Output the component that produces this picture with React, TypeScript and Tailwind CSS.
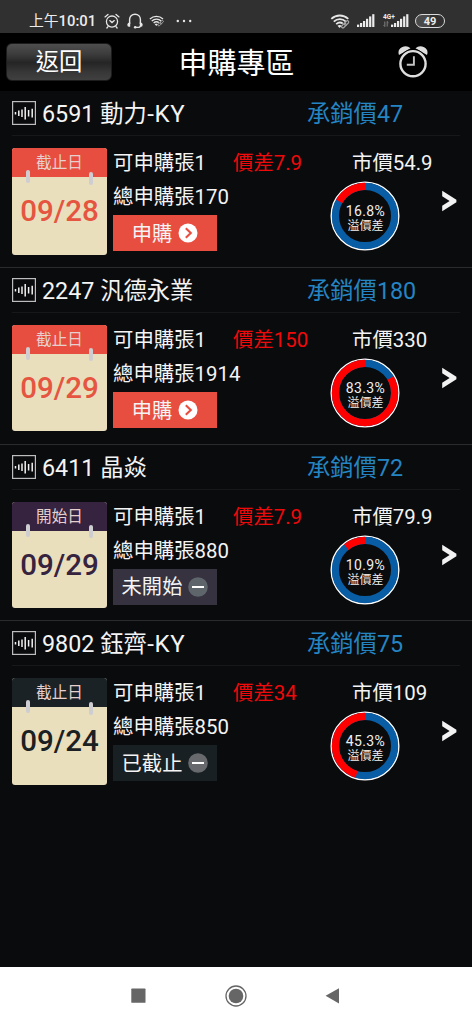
import React from 'react';

type Item = {
  code: string;
  suffix?: string;
  price: string;
  tag: string;
  date: string;
  total: string;
  diff: string;
  market: string;
  pct: number;
  action: string;
  kind: 'go' | 'none';
  head: string;
  ink: string;
  button: string;
  minus: string;
};

const items: Item[] = [
  { code: '6591 動力', suffix: '-KY', price: '47', tag: '截止日', date: '09/28', total: '170', diff: '7.9', market: '54.9', pct: 16.8, action: '申購', kind: 'go', head: 'bg-[#e84e40]', ink: 'text-[#e55540]', button: 'bg-[#e84e40]', minus: '' },
  { code: '2247 汎德永業', price: '180', tag: '截止日', date: '09/29', total: '1914', diff: '150', market: '330', pct: 83.3, action: '申購', kind: 'go', head: 'bg-[#e84e40]', ink: 'text-[#e55540]', button: 'bg-[#e84e40]', minus: '' },
  { code: '6411 晶焱', price: '72', tag: '開始日', date: '09/29', total: '880', diff: '7.9', market: '79.9', pct: 10.9, action: '未開始', kind: 'none', head: 'bg-[#36233f]', ink: 'text-[#36233f]', button: 'bg-[#36323f]', minus: '#5e666c' },
  { code: '9802 鈺齊', suffix: '-KY', price: '75', tag: '截止日', date: '09/24', total: '850', diff: '34', market: '109', pct: 45.3, action: '已截止', kind: 'none', head: 'bg-[#1b2226]', ink: 'text-[#1b2022]', button: 'bg-[#182024]', minus: '#68696c' },
];

function Wifi({ className }: { className: string }) {
  return (
    <svg viewBox="0 0 22 16" className={className} fill="none" stroke="#e6e6e6" strokeWidth="1.9">
      <path d="M1.2 5.2C6.5 0.4 14 0.4 19.3 5.2" />
      <path d="M3.8 8.1C7.7 4.7 13 4.7 16.8 8.1" />
      <path d="M6.4 10.8C8.7 8.8 11.5 8.8 13.4 10.2" />
      <path d="M7.8 12.4C9 11.5 11 11.5 12.2 12.4L10 14.8Z" fill="#e6e6e6" stroke="none" />
      <g stroke="#a8a8a8" strokeWidth="1.2">
        <rect x="11.8" y="11" width="5.6" height="2.8" rx="1.4" transform="rotate(-45 14.6 12.4)" />
        <rect x="14.6" y="8.2" width="5.6" height="2.8" rx="1.4" transform="rotate(-45 17.4 9.6)" />
      </g>
    </svg>
  );
}

function Signal() {
  return (
    <svg viewBox="0 0 18 14" className="h-[14px] w-[18px] shrink-0" fill="#ececec">
      <rect x="0" y="10.6" width="2.2" height="2.4" />
      <rect x="3" y="9" width="2.2" height="4" />
      <rect x="6" y="7" width="2.2" height="6" />
      <rect x="9" y="4.8" width="2.2" height="8.2" />
      <rect x="12.1" y="2.4" width="2.2" height="10.6" />
      <rect x="15.2" y="0.2" width="2.2" height="12.8" />
    </svg>
  );
}

function StatusBar() {
  return (
    <div className="flex h-[33px] items-center bg-[#303030] pt-[9px] pl-[29px] text-[#ececec]">
      <span className="flex w-[68px] text-[14.8px] leading-[20px] whitespace-nowrap">
        <span>上午</span>
        <span className="font-medium">10:01</span>
      </span>
      <svg viewBox="0 0 16 16" className="ml-[7px] h-4 w-4 shrink-0" fill="none" stroke="#e6e6e6" strokeWidth="1.3" strokeLinecap="round">
        <circle cx="8" cy="8.6" r="5.6" />
        <path d="M5.8 7.6L8 9.6L10.3 7.6M1 3.9L4 1.4M15 3.9L12 1.4M4 13.6L2.9 15M12 13.6L13.1 15" />
      </svg>
      <svg viewBox="0 0 16 16" className="ml-[7px] h-4 w-4 shrink-0" fill="none" stroke="#e6e6e6" strokeWidth="1.4">
        <path d="M2.6 11V6.6C2.6 3.6 4.8 1.3 8 1.3S13.4 3.6 13.4 6.6V11" />
        <path d="M0.3 11.5Q0.3 9.7 3.2 9.2V13.8H1.8Q0.3 13.8 0.3 11.5ZM15.7 11.5Q15.7 9.7 12.8 9.2V13.8H14.2Q15.7 13.8 15.7 11.5Z" fill="#e6e6e6" stroke="none" />
        <path d="M8 14.4H11.2Q13 14.4 13.4 13" />
        <circle cx="8.2" cy="14.3" r="1.3" fill="#e6e6e6" stroke="none" />
      </svg>
      <Wifi className="ml-[6px] h-[12px] w-[16px] shrink-0" />
      <svg viewBox="0 0 16 4" className="ml-[11px] h-1 w-4 shrink-0" fill="#e6e6e6">
        <circle cx="1.8" cy="2" r="1.2" />
        <circle cx="8" cy="2" r="1.2" />
        <circle cx="14.2" cy="2" r="1.2" />
      </svg>
      <Wifi className="ml-[138px] h-[15px] w-[21px] shrink-0" />
      <div className="ml-[6px] flex items-center">
        <Signal />
      </div>
      <div className="ml-[8px] flex h-[14px] w-[26px] shrink-0">
        <div className="w-[8px]">
          <div className="w-[14px] text-[6.5px] leading-[6px] font-bold">4G+</div>
          <svg viewBox="0 0 6 6" className="mt-[1px] h-[6px] w-[6px]" stroke="#8a8a8a" strokeWidth="0.9" fill="none">
            <path d="M1.8 0.5V5.5M0.6 4.3L1.8 5.5M4.2 5.5V0.5M5.4 1.7L4.2 0.5" />
          </svg>
        </div>
        <Signal />
      </div>
      <div className="ml-[6px] flex h-[14px] w-[30px] shrink-0 items-center justify-center rounded-full border border-[#dadada] bg-[linear-gradient(90deg,#4a4a4a_50%,#303030_50%)] text-[11px] leading-none font-bold">
        <span>49</span>
      </div>
    </div>
  );
}

function TitleBar() {
  return (
    <div className="grid h-[58px] grid-cols-[172px_129px_171px] items-center bg-black text-white">
      <button className="ml-[6px] flex h-[38px] w-[106px] items-center justify-center rounded-[6px] border border-[#1c1c1c] bg-[linear-gradient(180deg,#4e4e4e_0%,#3c3c3c_28%,#252525_52%,#373737_78%,#404040_100%)] pt-[2px] text-[23.3px] leading-none">
        返回
      </button>
      <h1 className="pt-[3px] text-center text-[29px] leading-[38px] whitespace-nowrap">申購專區</h1>
      <svg viewBox="0 0 32 34" className="ml-[96px] h-[34px] w-[32px]">
        <path d="M2 10A7 6.5 0 0 1 13.5 3.2ZM30 10A7 6.5 0 0 0 18.5 3.2Z" fill="#dedede" />
        <circle cx="16" cy="18.7" r="14.6" fill="#000" />
        <circle cx="16" cy="18.7" r="12.6" fill="#000" stroke="#dedede" strokeWidth="2.4" />
        <path d="M16.9 11.2V19.8H9.8" fill="none" stroke="#c4c4c4" strokeWidth="1.9" />
      </svg>
    </div>
  );
}

function Ring({ pct }: { pct: number }) {
  const len = 2 * Math.PI * 29.6;
  return (
    <div className="grid h-[70px] w-[70px] place-items-center">
      <svg viewBox="0 0 70 70" className="col-start-1 row-start-1 h-[70px] w-[70px]" fill="none">
        <circle cx="35" cy="35" r="33.7" stroke="#fff" strokeWidth="1.6" />
        <circle cx="35" cy="35" r="29.6" stroke="#095da5" strokeWidth="7.2" />
        <circle
          cx="35"
          cy="35"
          r="29.6"
          stroke="#fe0000"
          strokeWidth="7.2"
          strokeDasharray={`${(len * pct) / 100} ${len}`}
          transform="matrix(0 -1 -1 0 70 70)"
        />
      </svg>
      <div className="col-start-1 row-start-1 flex flex-col items-center pt-[6px] text-[#f0f0f0]">
        <span className="text-[14px] leading-[15px] tracking-[0.35px]">{pct}%</span>
        <span className="text-[12px] leading-[15px]">溢價差</span>
      </div>
    </div>
  );
}

function Calendar({ item }: { item: Item }) {
  return (
    <div className="relative h-[106.5px] w-[95px] shrink-0 overflow-hidden rounded-[3px] bg-[#e9dfbd]">
      <div className={`h-[29px] text-center text-[15.6px] leading-[30px] text-[#e6d0cd] ${item.head}`}>{item.tag}</div>
      <div className={`pt-[15px] text-center text-[29.5px] leading-[38px] font-medium ${item.ink}`}>{item.date}</div>
      <i className="absolute top-[22px] left-[13.5px] h-[13px] w-[4.5px] rounded-[2px] bg-[#cdcdd2]" />
      <i className="absolute top-[23.5px] left-[76.5px] h-[13px] w-[4.5px] rounded-[2px] bg-[#cdcdd2]" />
    </div>
  );
}

function Row({ item, last }: { item: Item; last: boolean }) {
  return (
    <section className={`h-[176.75px] border-b ${last ? 'border-transparent' : 'border-[#2a2b2d]'}`}>
      <div className="mx-3 flex h-[45px] items-center border-b border-[#17181a] text-[23.3px] leading-[30px]">
        <svg viewBox="0 0 24 24" className="h-6 w-6 shrink-0" fill="none" stroke="#bdbdbd">
          <rect x="0.6" y="0.6" width="22.8" height="22.8" strokeWidth="1.2" />
          <path d="M3.5 11V13.5M6.8 9.5V15M10 8.5V16M13.2 6V18.5M16.6 9V15.5M20.2 7.8V16.5" stroke="#f2f2f2" strokeWidth="1.5" />
        </svg>
        <span className="w-[271px] pt-[2px] pl-[6px] whitespace-nowrap">
          {item.code}
          {item.suffix && <span className="ml-[0.5px] text-[24px] tracking-[0.6px]">{item.suffix}</span>}
        </span>
        <span className="pt-[2px] whitespace-nowrap text-[#2485c4]">承銷價{item.price}</span>
      </div>
      <div className="flex pt-[12px] pl-3">
        <Calendar item={item} />
        <div className="w-[224px] shrink-0 pl-[6px] text-[20.4px]">
          <div className="flex h-[30px] items-center pt-px whitespace-nowrap">
            <span className="w-[120px]">可申購張1</span>
            <span className="text-[#f0090b]">價差{item.diff}</span>
          </div>
          <div className="flex h-[37px] items-center pt-[2px] whitespace-nowrap">總申購張{item.total}</div>
          <button className={`flex h-[36px] w-[104px] items-center justify-center gap-[6px] text-[20.3px] leading-none ${item.button}`}>
            <span className="pt-[2px]">{item.action}</span>
            {item.kind === 'go' ? (
              <svg viewBox="0 0 20 20" className="h-5 w-5 shrink-0">
                <circle cx="10" cy="10" r="9.5" fill="#fff" />
                <path d="M7.8 5.2L12.8 10L7.8 14.8" fill="none" stroke="#e84e40" strokeWidth="2.1" />
              </svg>
            ) : (
              <svg viewBox="0 0 20 20" className="h-5 w-5 shrink-0">
                <circle cx="10" cy="10" r="9.8" fill={item.minus} />
                <path d="M4 10H16" stroke="#fff" strokeWidth="2" />
              </svg>
            )}
          </button>
        </div>
        <div className="w-[111px] shrink-0">
          <div className="flex h-[30px] items-center pt-px pl-[21px] text-[20.4px] whitespace-nowrap">市價{item.market}</div>
          <div className="mt-[3px] -ml-[0.6px]">
            <Ring pct={item.pct} />
          </div>
        </div>
        <svg viewBox="0 0 15 22" className="mt-[42px] h-[22px] w-[15px] shrink-0">
          <path d="M0.2 0.8L14.4 9.8V12.2L0.2 21.2V15.8L7.6 11L0.2 6.2Z" fill="#f2f2f2" />
        </svg>
      </div>
    </section>
  );
}

export default function App() {
  return (
    <div className="flex h-[1024px] w-[472px] flex-col overflow-hidden bg-[#0a0b0d] font-['Roboto','Noto_Sans_CJK_TC',sans-serif] text-[#f4f4f4] [font-kerning:none]">
      <StatusBar />
      <TitleBar />
      <main className="flex-1">
        {items.map((item, i) => (
          <Row key={item.code} item={item} last={i === items.length - 1} />
        ))}
      </main>
      <nav className="grid h-[57px] grid-cols-[90px_97px_98px_96px_91px] items-center bg-white">
        <svg viewBox="0 0 16 16" className="col-start-2 mx-auto h-4 w-4">
          <rect x="0.3" y="0.6" width="14.2" height="14.2" rx="0.6" fill="#666" />
        </svg>
        <svg viewBox="0 0 22 22" className="mx-auto h-[22px] w-[22px]" fill="none">
          <circle cx="11" cy="11" r="10" stroke="#666" strokeWidth="1.3" />
          <circle cx="11" cy="11" r="7.3" fill="#666" />
        </svg>
        <svg viewBox="0 0 16 16" className="mx-auto h-4 w-4">
          <path d="M0.6 7.8L14 0.2V15.4Z" fill="#666" />
        </svg>
      </nav>
    </div>
  );
}
